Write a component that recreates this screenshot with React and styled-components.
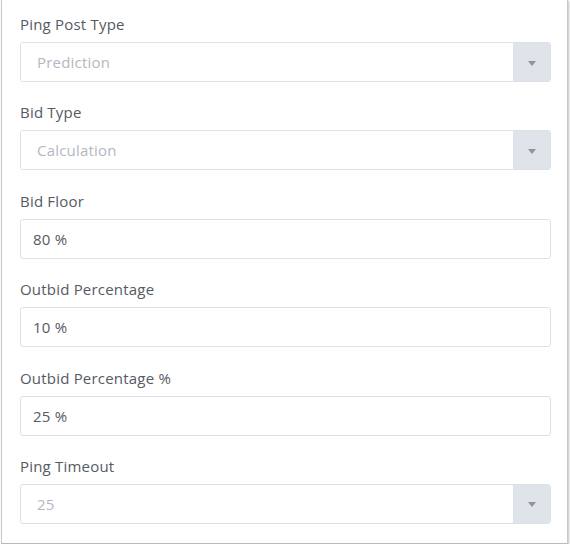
import React from "react";
import styled, { createGlobalStyle } from "styled-components";

const Global = createGlobalStyle`
  html, body { margin: 0; padding: 0; background: #ffffff; }
  body { font-family: "Open Sans", "Liberation Sans", sans-serif; }
`;

const Panel = styled.div`
  margin-left: 1px;
  width: 567px;
  box-sizing: border-box;
  background: #fff;
  border-left: 1px solid #c9c9c9;
  border-right: 1px solid #c9c9c9;
  border-bottom: 1px solid #b9b9b9;
  box-shadow: 1px 1px 2px rgba(0, 0, 0, 0.25);
  padding: 15px 16px 19px 18px;
  display: flex;
  flex-direction: column;
  gap: 21.4px;
`;

const Field = styled.div`
  display: flex;
  flex-direction: column;
  gap: 9px;
`;

const Label = styled.label`
  font-size: 15px;
  line-height: 18px;
  letter-spacing: 0.2px;
  color: #555a63;
`;

const Box = styled.div`
  height: 40px;
  box-sizing: border-box;
  border: 1px solid #dde1e7;
  border-radius: 3px;
  display: flex;
  align-items: stretch;
  overflow: hidden;
  background: #fff;
`;

const Value = styled.div`
  flex: 1;
  display: flex;
  align-items: center;
  padding-left: ${(p) => (p.$muted ? "16px" : "12px")};
  font-size: 15px;
  letter-spacing: 0.2px;
  color: ${(p) => (p.$muted ? "#b3b8c1" : "#555a63")};
`;

const Caret = styled.div`
  width: 37px;
  background: #dfe3ea;
  display: flex;
  align-items: center;
  justify-content: center;
  padding-top: 2px;
`;

const fields = [
  { label: "Ping Post Type", value: "Prediction", select: true },
  { label: "Bid Type", value: "Calculation", select: true },
  { label: "Bid Floor", value: "80 %" },
  { label: "Outbid Percentage", value: "10 %" },
  { label: "Outbid Percentage %", value: "25 %" },
  { label: "Ping Timeout", value: "25", select: true },
];

export default function App() {
  return (
    <>
      <Global />
      <Panel>
        {fields.map((f) => (
          <Field key={f.label}>
            <Label>{f.label}</Label>
            <Box>
              <Value $muted={f.select}>{f.value}</Value>
              {f.select && (
                <Caret>
                  <svg width="8" height="5" viewBox="0 0 8 5">
                    <path d="M0 0 H8 L4 5 Z" fill="#8f949c" />
                  </svg>
                </Caret>
              )}
            </Box>
          </Field>
        ))}
      </Panel>
    </>
  );
}
